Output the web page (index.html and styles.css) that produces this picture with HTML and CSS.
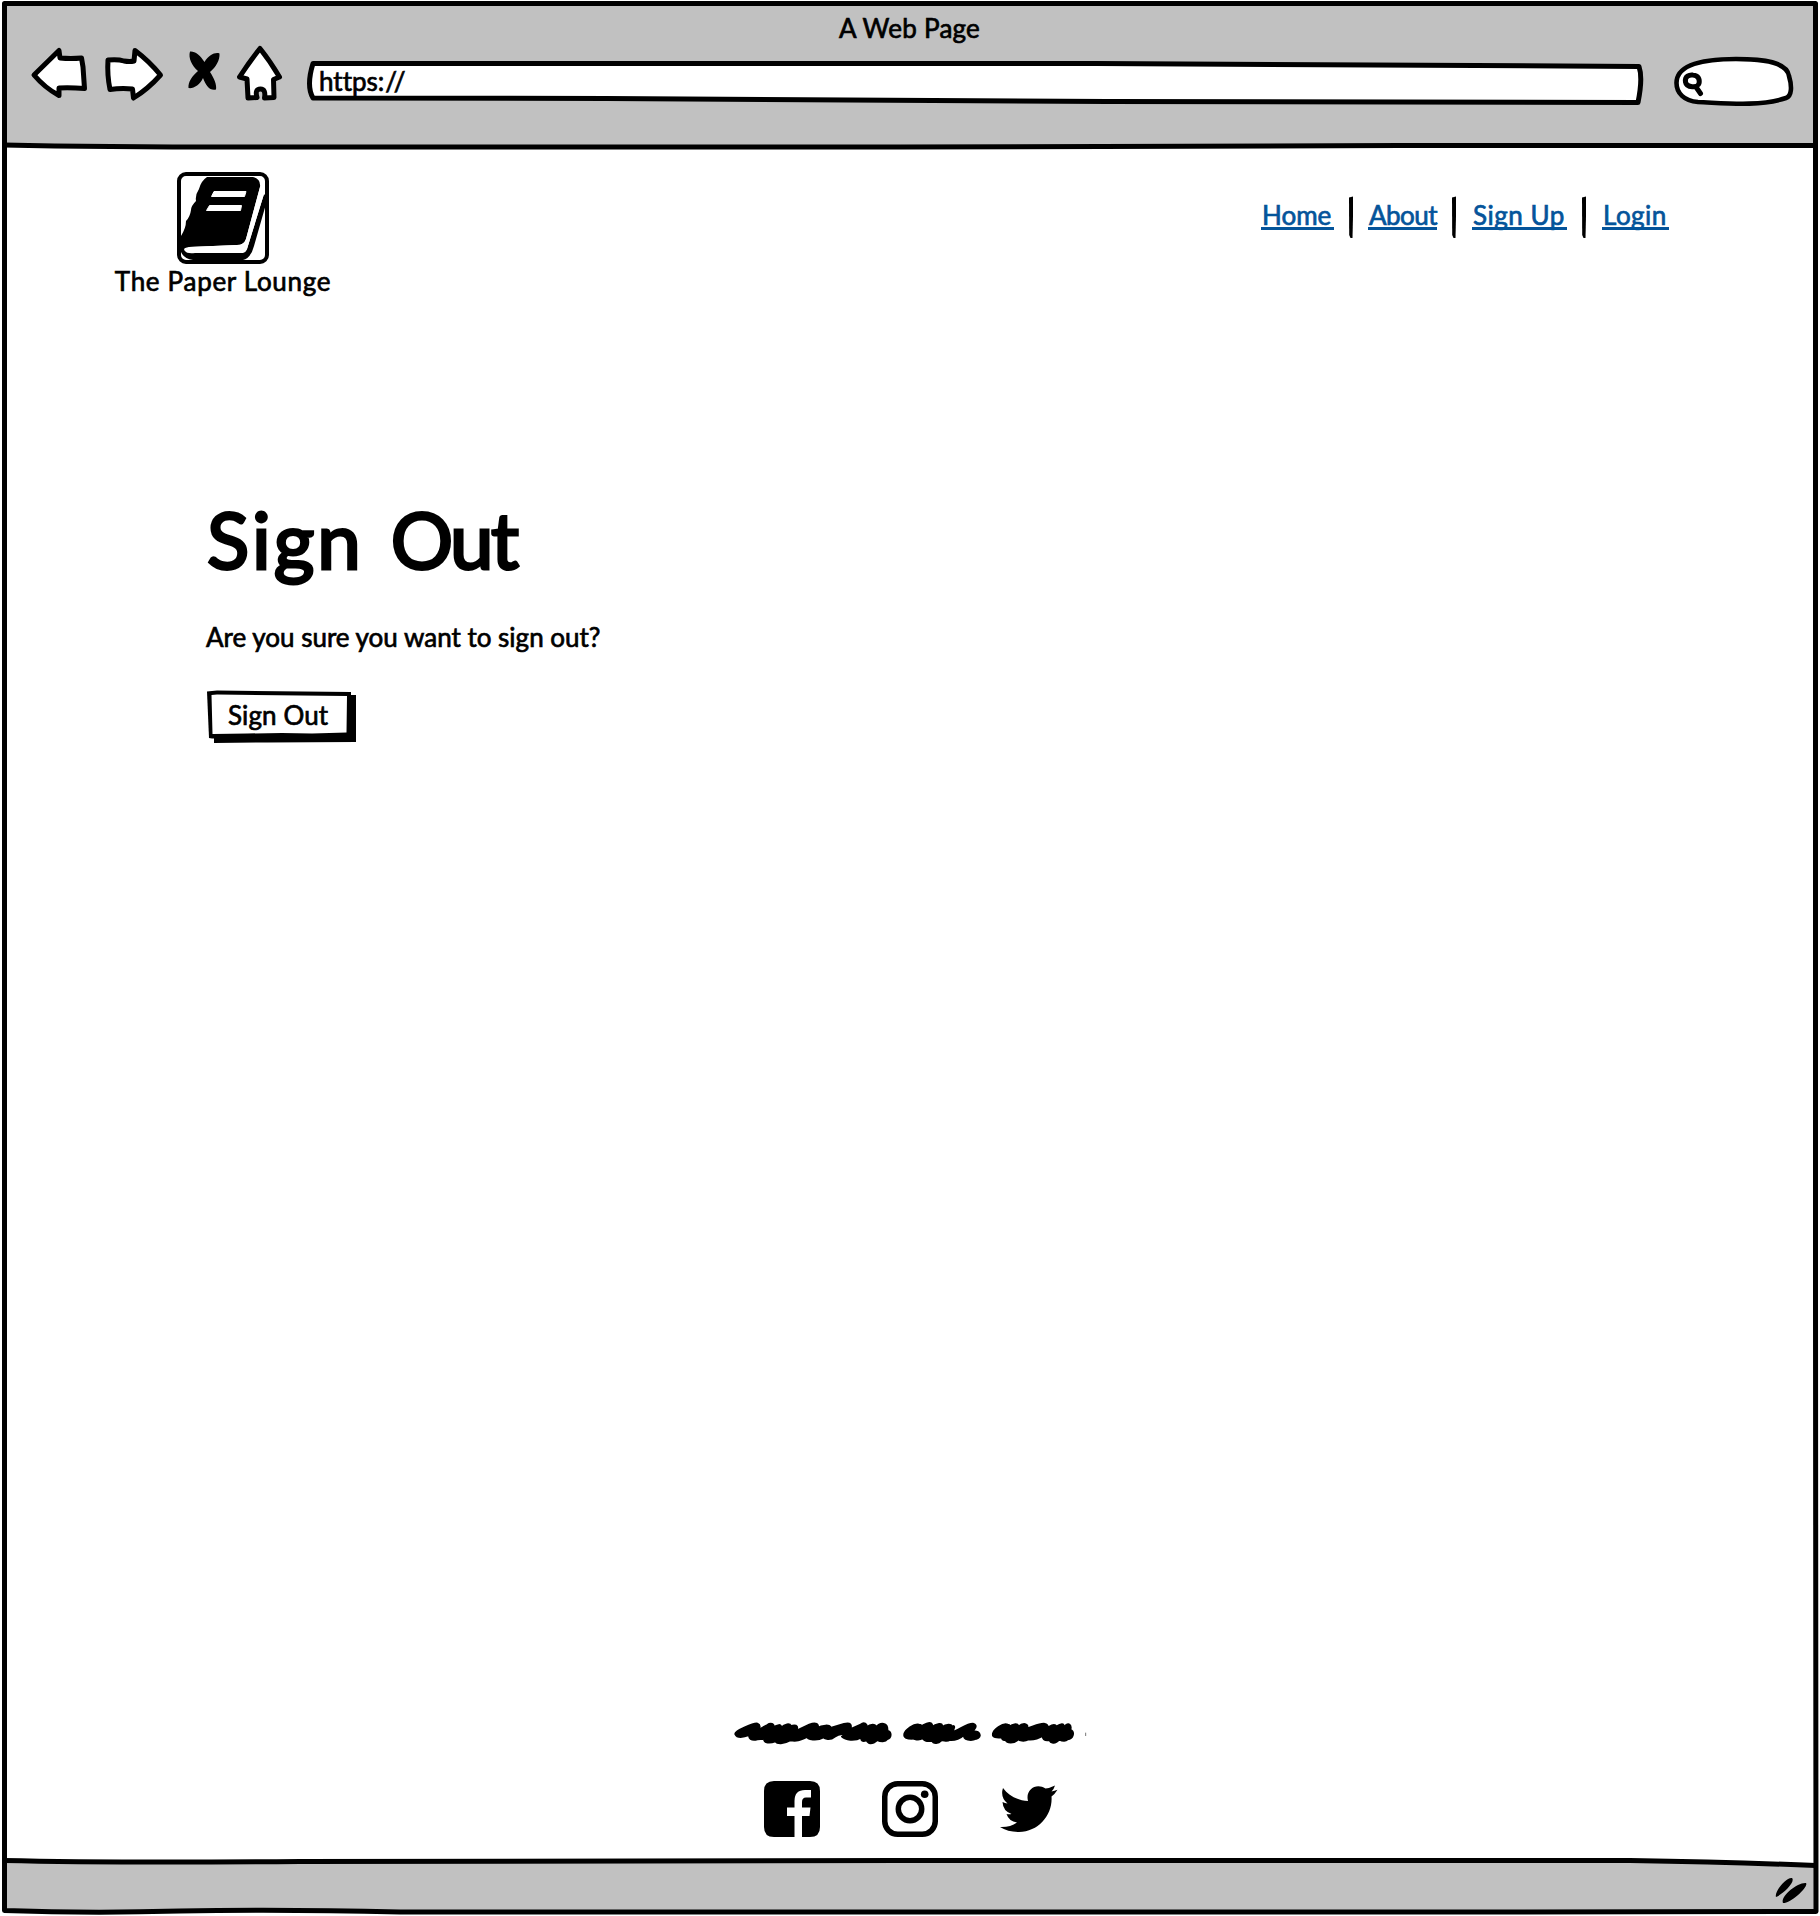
FILE: index.html
```html
<!DOCTYPE html>
<html lang="en">
<head>
<meta charset="utf-8">
<title>A Web Page</title>
<link rel="stylesheet" href="styles.css">
</head>
<body>
<div class="window">
  <header class="chrome">
    <div class="chrome-title"><span class="t-title">A Web Page</span></div>
    <div class="toolbar">
      <svg class="nav-icons" viewBox="0 0 256 60" width="256" height="60">
        <g fill="#fff" stroke="#000" stroke-width="5" stroke-linejoin="round">
          <path d="M4 33L29 8.500L30 16Q41 17 51.500 16L53 25L54.500 46.500Q41 45.500 29 46L29 53.500Q15 46 4 33Z"/>
          <path d="M78 18Q88 17 94 19Q100 20 104 19L105 8.500Q119 19 130.500 33Q118 47 103.500 56L102.500 47Q91 46 80 47.500Q77 33 78 18Z"/>
          <path d="M230 6.500Q240 19 249.500 35L243.500 37.500L244 55.500L234.500 56Q236 47 230.500 47Q224.500 47 227 55.500L218 56L217 37L209.500 35Q220 19 230 6.500Z"/>
        </g>
        <path d="M160 9.500C165 9 170 13 174.500 20C179 13 185 10 189.500 11.500C190 18 186 25 180 30C184 36 187 43 186 47.500C180 49 176 44 173 36C170 43 163 47 158.500 46C158 40 162 34 168 29C162 24 158 16 160 9.500Z"/>
      </svg>
      <div class="address">
        <svg class="sketch" viewBox="0 0 1340 42" width="1340" height="42"><path d="M6 2.500L790 2.500L1332 5.500Q1336 17 1331 41.500L800 40.500L300 37.500L6 37Q-1 25 6 2.500Z" fill="#fff" stroke="#000" stroke-width="5" stroke-linejoin="round"/></svg>
        <span class="t-url">https:<span class="slashes">//</span></span>
      </div>
      <svg class="search" viewBox="0 0 120 52" width="120" height="52">
        <path d="M24 46C10 45 2.500 37 2.500 27C2.500 8 30 3 62 3C90 3 113 6 115 20C118 30 118 40 112 42C85 51 50 47 24 46Z" fill="#fff" stroke="#000" stroke-width="4.600" stroke-linejoin="round"/>
        <path d="M11.500 26C10.500 20 15.500 18.500 19 19C24 19.500 26 23 25 27.500C24 32 12.500 32 11.500 26ZM22 31L26.500 37.500" fill="none" stroke="#000" stroke-width="5" stroke-linecap="round"/>
      </svg>
    </div>
  </header>

  <main class="page">
    <div class="masthead">
      <div class="brand">
        <svg class="book" viewBox="0 0 92 92" width="92" height="92">
          <path d="M30 5L76 5Q84 7 83 15L69 67Q67 73 60 73L12 75Q5 76 8 79Q10 82 18 81L66 81Q69 80 70 77L87 22Q91 25 89 32L77 74Q74 86 66 88L16 88Q3 86 3 74L4 64Q9 56 9 49Q13 45 14 38Q14 34 19 29Q18 23 22 17Q24 9 30 5Z"/>
          <path d="M12 75L60 73Q67 73 69 67L83 15L87 22L70 77Q69 80 66 80L18 80Q8 80 12 75Z" fill="#fff"/>
          <path d="M37 19.500H69L67.500 24.500H34.500ZM32.500 33.500H64.500L63.500 38.500H29.500Z" fill="#fff" stroke="#fff" stroke-width="1" stroke-linejoin="round"/>
          <rect x="2" y="2" width="88" height="88" rx="7" fill="none" stroke="#000" stroke-width="4"/>
        </svg>
        <span class="t-brand">The Paper Lounge</span>
      </div>
      <nav class="links">
        <a class="l-home"><span>Home</span></a><svg class="sep" viewBox="0 0 5 43" width="5" height="43"><path d="M0 1.500L4 .5L4 20L3.500 42L1.500 42L.2 39Z"/></svg>
        <a class="l-about"><span>About</span></a><svg class="sep" viewBox="0 0 5 43" width="5" height="43"><path d="M0 1.500L4 .5L4 20L3.500 42L1.500 42L.2 39Z"/></svg>
        <a class="l-sign"><span>Sign Up</span></a><svg class="sep" viewBox="0 0 5 43" width="5" height="43"><path d="M0 1.500L4 .5L4 20L3.500 42L1.500 42L.2 39Z"/></svg>
        <a class="l-login"><span>Login</span></a>
      </nav>
    </div>
    <section class="content">
      <h1><span class="w-sign">Sign</span> <span class="w-out">Out</span></h1>
      <p>Are you sure you want to sign out?</p>
      <button type="button">
        <svg class="sketch" viewBox="0 0 150 54" width="150" height="54">
          <path d="M7 12H144V5H149V52L60 52.500L7 53Z"/>
          <path d="M0 1.500L10 .5L144 2V48L5 48.500L2 48Z"/>
          <path d="M4.500 5L10 4.500L140 6L139.500 42.500L105 43.500L75 43L40 43.500L5.500 44Z" fill="#fff"/>
        </svg>
        <span class="t-btn">Sign Out</span>
      </button>
    </section>
    <footer class="foot">
      <svg viewBox="0 0 1140 135" width="380" height="45">
        <g stroke="#000" stroke-width="6" stroke-linejoin="round">
          <path d="M46 72C44 62 102 39 112 41C124 46 118 58 110 63L142 45C152 38 164 42 160 52C172 44 184 42 184 53C194 42 210 40 212 48C236 42 232 54 230 62L268 44C288 36 298 42 292 54C304 47 332 42 332 54L372 42C392 36 396 46 390 58L422 44C432 35 442 42 440 52C452 42 466 42 468 52C482 36 504 38 502 62C516 66 514 84 502 87C496 96 482 95 472 90C456 104 444 102 440 90C428 96 422 92 424 82C404 94 376 90 366 80C384 66 356 72 344 80C330 92 314 86 310 82C290 94 262 88 262 80C238 92 230 94 210 91C190 102 172 102 166 94C150 100 132 100 132 86L112 88C94 93 84 84 90 74C70 82 52 86 46 72Z"/>
          <path transform="translate(525)" d="M28 72C30 60 58 39 72 44C82 44 78 50 76 52C86 44 106 34 110 42C114 48 112 52 108 54C124 40 146 36 140 52C154 42 170 42 172 52C180 40 180 60 168 68C190 62 224 36 236 42C250 48 236 60 230 66C256 60 262 82 244 86C228 93 204 90 208 74C198 84 180 92 164 90C154 96 144 88 138 92C130 102 114 100 112 92C94 96 84 90 84 84C68 94 58 84 52 86C36 86 26 84 28 72Z"/>
          <path transform="translate(525)" d="M294 72C294 60 324 38 338 44C346 44 342 50 340 52C356 40 370 40 370 50C384 38 402 40 396 56C416 50 438 38 450 42C464 46 456 56 448 62C464 46 480 40 484 50C504 36 510 44 502 56C520 34 530 42 526 60C540 66 534 86 518 88C510 96 500 92 492 88C480 104 466 98 464 90C448 94 440 84 446 76C432 84 418 90 400 88C386 96 372 90 370 88C354 102 336 98 332 90C322 92 320 84 322 82C304 84 292 82 294 72Z"/>
        </g>
        <path d="M1097 68V78" stroke="#777" stroke-width="3"/>
      </svg>
      <div class="social">
        <svg viewBox="0 0 56 56" width="56" height="56"><path d="M10 0H46Q56 0 56 10V46Q56 56 46 56H38V35H45.500L46.500 26.500H38V21Q38 16.500 42 16.500H47V9H41Q30.500 9 30.500 20V26.500H23V35H30.500V56H10Q0 56 0 46V10Q0 0 10 0Z"/></svg>
        <svg viewBox="0 0 56 56" width="56" height="56"><rect x="2.750" y="2.750" width="50.500" height="50.500" rx="13" fill="none" stroke="#000" stroke-width="5.500"/><circle cx="28" cy="28" r="11.700" fill="none" stroke="#000" stroke-width="5.500"/><circle cx="42.700" cy="13.300" r="3.800"/></svg>
        <svg viewBox="0 0 58 48" width="58" height="48"><path d="M3 3C9 11 18 15.500 28 16C25 5 36-3 45.500 3.500Q50 3 55 .5Q54 4 51.500 6.500Q54.500 6 57.500 4.800Q55 9 51.500 11.500C53 29 39 47 19 47Q8 47 0 42Q10 42.500 17 37.500Q9 36.500 6.500 29Q9 29.500 11.500 29Q3 26 2.500 17Q5 18 7.500 18.500Q0 12 3 3Z"/></svg>
      </div>
    </footer>
  </main>
  <div class="statusbar">
    <svg viewBox="0 0 34 28" width="34" height="28"><path d="M2 20C0 15 12 0 18 1C22 5 8 18 2 20ZM9 26C6 20 23 5 32 6C35 9 18 26 9 26Z"/></svg>
  </div>
  <svg class="frame" viewBox="0 0 1820 1916" width="1820" height="1916">
    <path d="M1812 1863L1640 1860L1560 1860H1814V1866Z" fill="#fff"/>
    <g fill="none" stroke="#000" stroke-width="5" stroke-linejoin="round">
      <path d="M4.500 3.500H1815.500V1300L1816 1911.500L1500 1912H400Q280 1909 180 1911Q90 1913.500 4.500 1910.500V1200L4.500 3.500Z"/>
      <path d="M4 145Q100 147 240 147H900L1400 145.500H1815"/>
      <path d="M4 1860.500Q110 1863 300 1861.500L900 1860.500H1630Q1730 1862 1816 1865.500"/>
    </g>
  </svg>
</div>
</body>
</html>
```
FILE: styles.css
```css
* { box-sizing: border-box; }
body {
  margin: 0;
  background: #fff;
  color: #000;
  font-family: Lato, "Open Sans", sans-serif;
  font-size: 26px;
  line-height: 32px;
  font-variant-ligatures: none;
  -webkit-text-stroke: 0.7px currentColor;
}
svg { display: block; flex: none; overflow: visible; }
span { white-space: nowrap; }
.window {
  position: relative;
  width: 1820px;
  height: 1916px;
  display: flex;
  flex-direction: column;
  overflow: hidden;
  padding: 3px 4px 4px;
}
.frame { position: absolute; inset: 0; pointer-events: none; }
.chrome { height: 143px; background: #c1c1c1; flex: none; }
.chrome-title { display: flex; padding: 9px 0 0 835px; height: 43px; letter-spacing: 0.25px; }
.toolbar { display: flex; align-items: flex-start; padding-left: 26px; }
.nav-icons { margin-right: 21px; margin-top: -4px; }
.address { position: relative; width: 1340px; height: 42px; margin-top: 15px; padding: 4px 0 0 12px; }
.address span { position: relative; }
.slashes { letter-spacing: 2.5px; margin-left: 1px; }
.sketch { position: absolute; left: 0; top: 0; }
.search { margin: 10px 0 0 27px; }
.page { flex: 1; display: flex; flex-direction: column; }
.masthead { display: flex; justify-content: space-between; padding: 26px 147px 0 110px; height: 325px; }
.brand { width: 218px; display: flex; flex-direction: column; align-items: center; }
.brand span { margin-top: 1px; letter-spacing: 0.7px; }
.links { display: flex; align-items: flex-start; padding-top: 24px; color: #04549a; }
.links a { height: 34px; padding: 3px 0 0 1px; border-bottom: 3px solid #04549a; }
.sep { fill: #000; }
.l-home { width: 73px; margin-right: 15px; }
.l-about { width: 69px; margin: 0 15px 0 14px; letter-spacing: -0.5px; }
.l-sign { width: 95px; margin: 0 15px; letter-spacing: 0.5px; }
.l-login { width: 67px; margin-left: 15px; letter-spacing: 0.5px; }
.content { padding-left: 202px; }
h1 {
  margin: 18px 0 0 1px;
  font-size: 78px;
  line-height: 100px;
  font-weight: 400;
  -webkit-text-stroke: 3px #000;
  word-spacing: 7px;
}
.w-sign { letter-spacing: 3px; }
.w-out { letter-spacing: -2.5px; }
p { margin: 32px 0 0; }
button {
  position: relative;
  display: block;
  width: 150px;
  height: 54px;
  margin: 37px 0 0 1px;
  padding: 0 0 4px 21px;
  border: 0;
  background: none;
  color: inherit;
  font: inherit;
  letter-spacing: 0.1px;
  text-align: left;
  -webkit-text-stroke: inherit;
}
button span { position: relative; }
.foot { margin-top: auto; display: flex; flex-direction: column; align-items: flex-start; padding: 0 0 23px 716px; }
.social { display: flex; align-items: center; gap: 62px; margin: 26px 0 0 43.5px; }
.statusbar { height: 52px; background: #c1c1c1; display: flex; justify-content: flex-end; padding: 17px 8px 0 0; flex: none; }
```
